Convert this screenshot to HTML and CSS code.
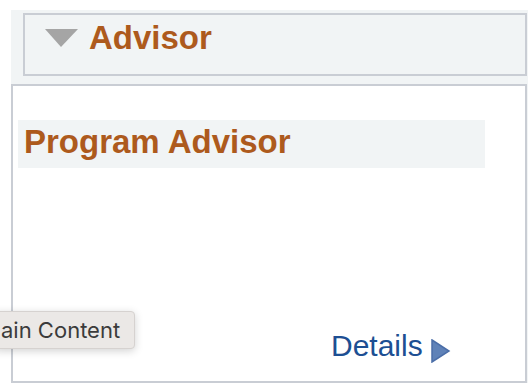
FILE: index.html
```html
<!DOCTYPE html>
<html lang="en">
<head>
    <meta charset="UTF-8">
    <title>Advisor</title>
    <link rel="stylesheet" href="styles.css">
</head>
<body>

    <div class="page">
        <!-- Collapsible header -->
        <div class="section-head">
            <span class="collapse-arrow"></span>
            <h1>Advisor</h1>
        </div>

        <!-- Advisor box -->
        <div class="advisor-box">
            <h2>Program Advisor</h2>
            <div class="details-row">
                <a href="#" class="details-link">Details</a>
                <svg class="details-arrow" width="20" height="24" viewBox="0 0 20 24">
                    <polygon points="1,1 18,12 1,23" fill="#5f82b8" stroke="#4b6ea8" stroke-width="1.5"/>
                </svg>
            </div>
        </div>
    </div>

    <!-- Browser tooltip -->
    <div class="tooltip">ain Content</div>

</body>
</html>
```

FILE: styles.css
```css
* {
    box-sizing: border-box;
    margin: 0;
    padding: 0;
}

body {
    background: #fff;
    font-family: 'Liberation Sans', Arial, sans-serif;
}

.page {
    margin: 10px 0 0 11px;
    padding-top: 3px;
    width: 517px;
    background: #f1f4f5;
}

/* Header */
.section-head {
    display: flex;
    align-items: flex-start;
    height: 63px;
    margin: 0 1px 8px 12px;
    padding: 5px 0 0 20px;
    border: 2px solid #c9cdd4;
    background: #f1f4f5;
}

.collapse-arrow {
    width: 0;
    height: 0;
    margin-top: 9px;
    margin-right: 11px;
    border-left: 16px solid transparent;
    border-right: 17px solid transparent;
    border-top: 18px solid #a5a5a5;
}

.section-head h1 {
    font-size: 33px;
    line-height: 36px;
    font-weight: bold;
    color: #ad5a1d;
}

/* Advisor box */
.advisor-box {
    height: 299px;
    margin-right: 1px;
    border: 2px solid #c9cdd4;
    background: #fff;
}

.advisor-box h2 {
    width: 467px;
    height: 48px;
    margin: 34px 0 0 5px;
    padding: 0 0 4px 6px;
    font-size: 33px;
    line-height: 44px;
    font-weight: bold;
    color: #ad5a1d;
    background: #f1f4f5;
}

.details-row {
    display: flex;
    align-items: flex-start;
    margin: 160px 0 0 318px;
}

.details-link {
    font-size: 30px;
    line-height: 36px;
    color: #1d4f93;
    text-decoration: none;
}

.details-arrow {
    margin: 11px 0 0 8px;
}

/* Tooltip */
.tooltip {
    position: absolute;
    left: -6px;
    top: 311px;
    width: 141px;
    height: 38px;
    padding-left: 6px;
    font-family: Inter, 'Liberation Sans', sans-serif;
    font-size: 22px;
    line-height: 36px;
    color: #3b3b3b;
    background: #ebe8e6;
    border: 1px solid #d6d2d0;
    border-radius: 4px;
    box-shadow: 0 2px 8px rgba(0, 0, 0, 0.18);
}
```
